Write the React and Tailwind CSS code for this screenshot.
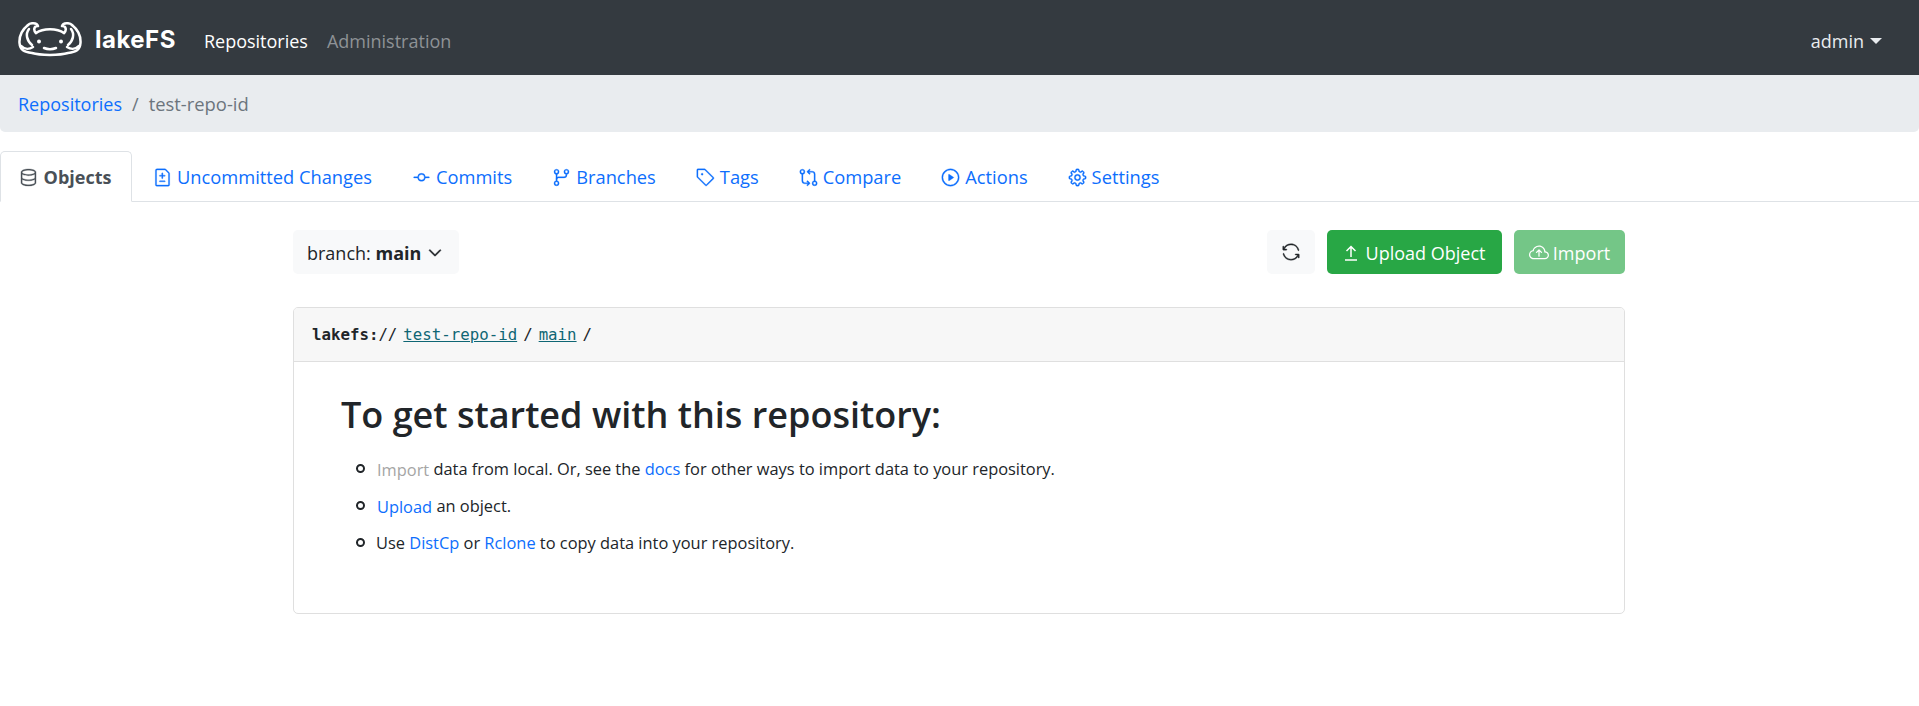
import React from "react";
import { GoDatabase, GoFileDiff, GoGitCommit, GoGitBranch, GoTag, GoGitCompare, GoPlay, GoGear, GoSync, GoChevronDown } from "react-icons/go";
import { BsCloudArrowUp } from "react-icons/bs";

function Logo() {
  return (
    <svg width="64" height="35" viewBox="0 0 64 35" fill="none" stroke="white" strokeWidth="2.5" strokeLinecap="round" strokeLinejoin="round" className="shrink-0">
      <path d="M10 3C5 7 1 13 1.500 21C2 28 6 30 14 31C22 33.500 42 33.500 50 31C58 30 62 28 62.500 21C63 13 59 7 54 3" />
      <path d="M10 3C12 .5 19 .5 20 4C16 4 15 8 18 11" />
      <path d="M54 3C52 .5 45 .5 44 4C48 4 49 8 46 11" />
      <path d="M18 11C25 6 39 6 46 11" />
      <path d="M11 7C7 12 9 19 14 23" />
      <path d="M53 7C57 12 55 19 50 23" />
      <path d="M3 24C7 28 12 27 15 25" />
      <path d="M61 24C57 28 52 27 49 25" />
      <path d="M26 26Q32 28.500 38 26" />
      <circle cx="21" cy="19.500" r="2" fill="white" stroke="none" />
      <circle cx="43" cy="19.500" r="2" fill="white" stroke="none" />
    </svg>
  );
}

function UploadIcon() {
  return (
    <svg width="14" height="16" viewBox="0 0 14 16" fill="none" stroke="currentColor" strokeWidth="1.500" className="shrink-0">
      <path d="M7 12V1.500M2.500 6L7 1.500L11.500 6" />
      <path d="M1 15H13" />
    </svg>
  );
}

const tabs = [
  { label: "Uncommitted Changes", icon: GoFileDiff },
  { label: "Commits", icon: GoGitCommit },
  { label: "Branches", icon: GoGitBranch },
  { label: "Tags", icon: GoTag },
  { label: "Compare", icon: GoGitCompare },
  { label: "Actions", icon: GoPlay },
  { label: "Settings", icon: GoGear },
];

function Bullet() {
  return <span className="w-[9px] h-[9px] border-2 border-[#212529] rounded-full shrink-0 mt-[7px]" />;
}

export default function App() {
  return (
    <div className="min-h-[706px] bg-white font-['Open_Sans',sans-serif] text-[#212529] text-[18px]">
      <nav className="h-[75px] bg-[#343a40] flex items-center pl-[18px] pr-[37px] pt-[4px]">
        <Logo />
        <span className="ml-[13px] text-[24px] font-bold text-white font-['Inter',sans-serif] tracking-[0.5px]">lakeFS</span>
        <a className="ml-[28px] pt-[3px] text-white">Repositories</a>
        <a className="ml-[19px] pt-[3px] text-[#8e9296]">Administration</a>
        <div className="ml-auto pt-[3px] flex items-center gap-[6px] text-[#e9ecef]">
          admin
          <span className="w-0 h-0 border-x-[6px] border-x-transparent border-t-[6px] border-t-[#e9ecef]" />
        </div>
      </nav>

      <div className="h-[57px] pt-[1px] bg-[#e9ecef] rounded-b-[5px] flex items-center pl-[18px]">
        <a className="text-[#0d6efd]">Repositories</a>
        <span className="ml-[10px] mr-[10px] text-[#6c757d]">/</span>
        <span className="text-[18.4px] text-[#6c757d]">test-repo-id</span>
      </div>

      <div className="mt-[19px] h-[51px] border-b border-[#dee2e6] flex">
        <div className="h-[51px] w-[132px] pt-[1px] pr-[2px] border border-b-white border-[#dee2e6] rounded-t-[5px] bg-white flex items-center justify-center gap-[6px] font-bold text-[#495057]">
          <GoDatabase size={19} stroke="currentColor" strokeWidth={0.4} />
          Objects
        </div>
        <div className="flex items-center pl-[21px] pt-[2px] gap-[40px] h-[50px] text-[#0d6efd] text-[18.3px]">
          {tabs.map((t) => (
            <a key={t.label} className="flex items-center gap-[5px]">
              <t.icon size={19} stroke="currentColor" strokeWidth={0.4} />
              {t.label}
            </a>
          ))}
        </div>
      </div>

      <main className="ml-[293px] w-[1332px] pt-[28px]">
        <div className="flex items-center">
          <button className="h-[44px] w-[166px] bg-[#f8f9fa] rounded-[5px] flex items-center pl-[14px] pt-[2px] gap-[4px]">
            <span>branch: <b>main</b></span>
            <GoChevronDown size={20} stroke="currentColor" strokeWidth={0.6} />
          </button>
          <button className="ml-auto h-[44px] w-[48px] bg-[#f8f9fa] rounded-[5px] flex items-center justify-center">
            <GoSync size={18} stroke="currentColor" strokeWidth={0.5} />
          </button>
          <button className="ml-[12px] h-[44px] w-[175px] bg-[#28a745] rounded-[5px] text-white flex items-center justify-center pt-[2px] gap-[8px]">
            <UploadIcon />
            Upload Object
          </button>
          <button className="ml-[12px] h-[44px] w-[111px] bg-[#74c687] rounded-[5px] text-white flex items-center justify-center pt-[2px] gap-[4px]">
            <BsCloudArrowUp size={20} />
            Import
          </button>
        </div>

        <section className="mt-[33px] h-[307px] border border-[#dfdfdf] rounded-[5px] overflow-hidden">
          <header className="h-[54px] pt-[1px] bg-[#f7f7f7] border-b border-[#dfdfdf] flex items-center gap-[6px] pl-[18px] font-['DejaVu_Sans_Mono',monospace] text-[15.75px]">
            <span><b>lakefs:</b>//</span>
            <a className="text-[#0f6674] underline">test-repo-id</a>
            <span>/</span>
            <a className="text-[#0f6674] underline">main</a>
            <span>/</span>
          </header>
          <div className="pt-[31px]">
            <h2 className="pl-[47px] text-[36px] leading-[44px] font-semibold">To get started with this repository:</h2>
            <ul className="mt-[20px] pl-[62px] text-[16.4px] leading-[24px] flex flex-col gap-[13px]">
              <li className="flex gap-[11px]">
                <Bullet />
                <span><a className="inline-block ml-[1px] translate-y-[1px] text-[#a5a5a5]">Import</a> data from local. Or, see the <a className="text-[#0d6efd]">docs</a> for other ways to import data to your repository.</span>
              </li>
              <li className="flex gap-[11px]">
                <Bullet />
                <span><a className="inline-block ml-[1px] translate-y-[1px] text-[#0d6efd]">Upload</a> an object.</span>
              </li>
              <li className="flex gap-[11px]">
                <Bullet />
                <span>Use <a className="text-[#0d6efd]">DistCp</a> or <a className="text-[#0d6efd]">Rclone</a> to copy data into your repository.</span>
              </li>
            </ul>
          </div>
        </section>
      </main>
    </div>
  );
}
